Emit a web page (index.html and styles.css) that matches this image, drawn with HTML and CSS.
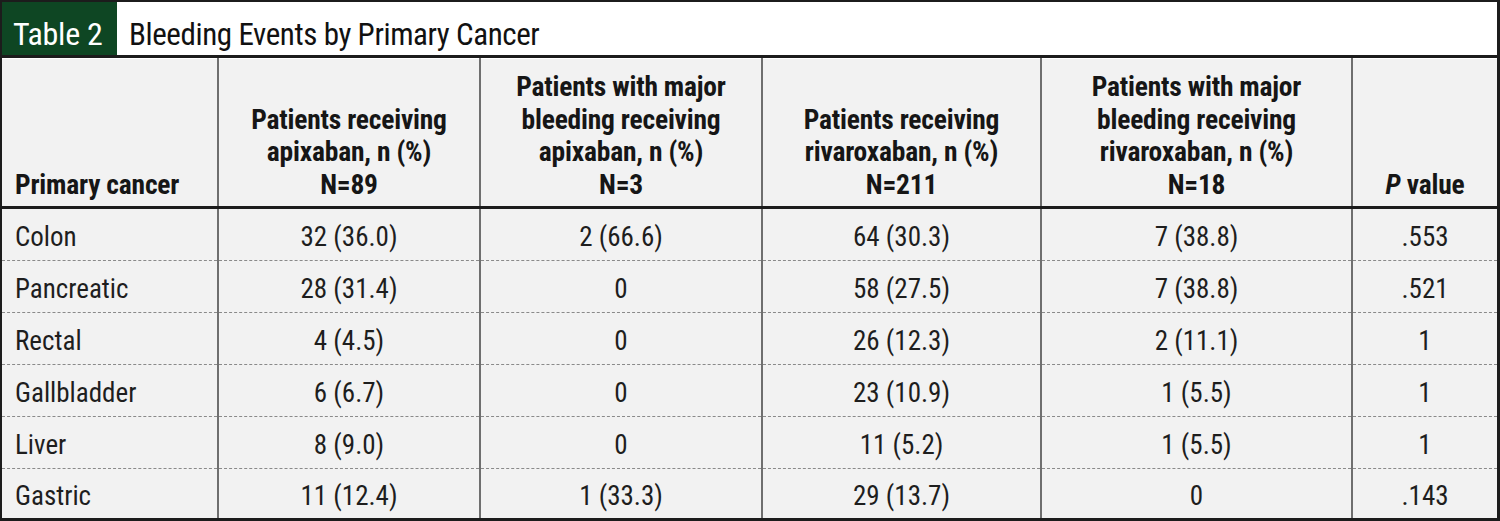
FILE: index.html
```html
<!DOCTYPE html>
<html lang="en">
<head>
<meta charset="utf-8">
<title>Table 2 - Bleeding Events by Primary Cancer</title>
<link rel="stylesheet" href="styles.css">
</head>
<body>
<div class="frame">
  <div class="title-bar">
    <div class="label">Table 2</div>
    <div class="caption">Bleeding Events by Primary Cancer</div>
  </div>
  <table class="data">
    <colgroup>
      <col class="c1"><col class="c2"><col class="c3"><col class="c4"><col class="c5"><col class="c6">
    </colgroup>
    <thead>
      <tr>
        <th class="left">Primary cancer</th>
        <th>Patients receiving<br>apixaban, n (%)<br>N=89</th>
        <th>Patients with major<br>bleeding receiving<br>apixaban, n (%)<br>N=3</th>
        <th>Patients receiving<br>rivaroxaban, n (%)<br>N=211</th>
        <th>Patients with major<br>bleeding receiving<br>rivaroxaban, n (%)<br>N=18</th>
        <th><i>P</i> value</th>
      </tr>
    </thead>
    <tbody>
      <tr><td class="left">Colon</td><td>32 (36.0)</td><td>2 (66.6)</td><td>64 (30.3)</td><td>7 (38.8)</td><td>.553</td></tr>
      <tr><td class="left">Pancreatic</td><td>28 (31.4)</td><td>0</td><td>58 (27.5)</td><td>7 (38.8)</td><td>.521</td></tr>
      <tr><td class="left">Rectal</td><td>4 (4.5)</td><td>0</td><td>26 (12.3)</td><td>2 (11.1)</td><td>1</td></tr>
      <tr><td class="left">Gallbladder</td><td>6 (6.7)</td><td>0</td><td>23 (10.9)</td><td>1 (5.5)</td><td>1</td></tr>
      <tr><td class="left">Liver</td><td>8 (9.0)</td><td>0</td><td>11 (5.2)</td><td>1 (5.5)</td><td>1</td></tr>
      <tr class="last"><td class="left">Gastric</td><td>11 (12.4)</td><td>1 (33.3)</td><td>29 (13.7)</td><td>0</td><td>.143</td></tr>
    </tbody>
  </table>
</div>
</body>
</html>
```

FILE: styles.css
```css
html, body {
  margin: 0;
  padding: 0;
  background: #ffffff;
}

.frame {
  width: 1500px;
  height: 521px;
  box-sizing: border-box;
  border-style: solid;
  border-color: #1c1c1c;
  border-width: 2px 3px 3px 2px;
  background: #f2f2f2;
  font-family: "Roboto Condensed", "Liberation Sans Narrow", "DejaVu Sans Condensed", "Liberation Sans", sans-serif;
  color: #1a1a1a;
  display: flex;
  flex-direction: column;
  overflow: hidden;
}

.title-bar {
  display: flex;
  height: 53px;
  background: #ffffff;
  border-bottom: 3px solid #1c1c1c;
  flex: none;
}

.title-bar .label {
  width: 115px;
  background: #0e4623;
  color: #ffffff;
  font-size: 32px;
  line-height: 53px;
  padding-top: 6px;
  box-sizing: border-box;
  padding-left: 11px;
  letter-spacing: -0.3px;
}

.title-bar .caption {
  font-size: 31px;
  line-height: 53px;
  padding-top: 6px;
  box-sizing: border-box;
  padding-left: 12px;
  letter-spacing: -0.4px;
  color: #111;
}

.data {
  width: 1495px;
  table-layout: fixed;
  border-collapse: collapse;
  border-top: 1px solid #ffffff;
}

.c1 { width: 216px; }
.c2 { width: 262px; }
.c3 { width: 282px; }
.c4 { width: 279px; }
.c5 { width: 311px; }
.c6 { width: 145px; }

.data th,
.data td {
  border-left: 2px solid #6f6f6f;
  padding: 0;
  text-align: center;
}

.data th:first-child,
.data td:first-child {
  border-left: none;
}

.data th {
  height: 142px;
  vertical-align: bottom;
  font-size: 27.5px;
  font-weight: bold;
  line-height: 32.5px;
  padding-bottom: 5px;
  border-bottom: 3px solid #1c1c1c;
  color: #161616;
  letter-spacing: -0.2px;
}

.data td {
  height: 46px;
  font-size: 27px;
  line-height: 30px;
  padding-top: 5px;
  vertical-align: middle;
  border-bottom: 1px dashed #8a8a8a;
  color: #1e1e1e;
}

.data tr.last td {
  border-bottom: none;
  height: 40px;
  vertical-align: top;
  padding-top: 12px;
}

.data .left {
  text-align: left;
  padding-left: 13px;
}
```
